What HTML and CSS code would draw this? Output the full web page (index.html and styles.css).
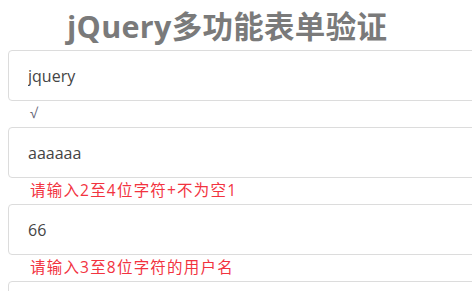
FILE: index.html
```html
<!DOCTYPE html>
<html lang="zh-CN">
<head>
    <meta charset="UTF-8">
    <title>jQuery多功能表单验证</title>
    <link rel="stylesheet" href="styles.css">
</head>
<body>
    <div class="container">
        <h1 class="title">jQuery多功能表单验证</h1>
        <form class="form">
            <div class="field">
                <input class="input" type="text" value="jquery">
                <p class="tip ok">√</p>
            </div>
            <div class="field">
                <input class="input" type="text" value="aaaaaa">
                <p class="tip error">请输入2至4位字符+不为空1</p>
            </div>
            <div class="field">
                <input class="input" type="text" value="66">
                <p class="tip error">请输入3至8位字符的用户名</p>
            </div>
            <div class="field">
                <input class="input" type="text" value="">
            </div>
        </form>
    </div>
</body>
</html>
```

FILE: styles.css
```css
* {
    margin: 0;
    padding: 0;
    box-sizing: border-box;
}

body {
    font-family: 'Open Sans', 'Noto Sans CJK SC', sans-serif;
    background-color: #fff;
    color: #555;
    overflow: hidden;
}

.container {
    width: 540px;
    padding: 0 8px;
}

.title {
    font-family: 'Open Sans', 'Noto Sans CJK SC', sans-serif;
    font-size: 30.5px;
    font-weight: 700;
    color: #7a7a7a;
    line-height: 52px;
    height: 50px;
    padding-left: 59px;
    letter-spacing: 0.3px;
}

.field {
    display: flex;
    flex-direction: column;
}

.input {
    height: 51px;
    width: 100%;
    border: 1px solid #dcdcdc;
    border-radius: 4px;
    padding: 0 19px;
    font-family: 'Open Sans', 'Noto Sans CJK SC', sans-serif;
    font-size: 16px;
    color: #444;
    background: #fff;
    outline: none;
}

.tip {
    height: 26px;
    line-height: 24px;
    font-size: 15.5px;
    padding-left: 22px;
    letter-spacing: 1.2px;
}

.tip.ok {
    color: #667;
    font-size: 14px;
}

.tip.error {
    color: #f2333f;
}
```
